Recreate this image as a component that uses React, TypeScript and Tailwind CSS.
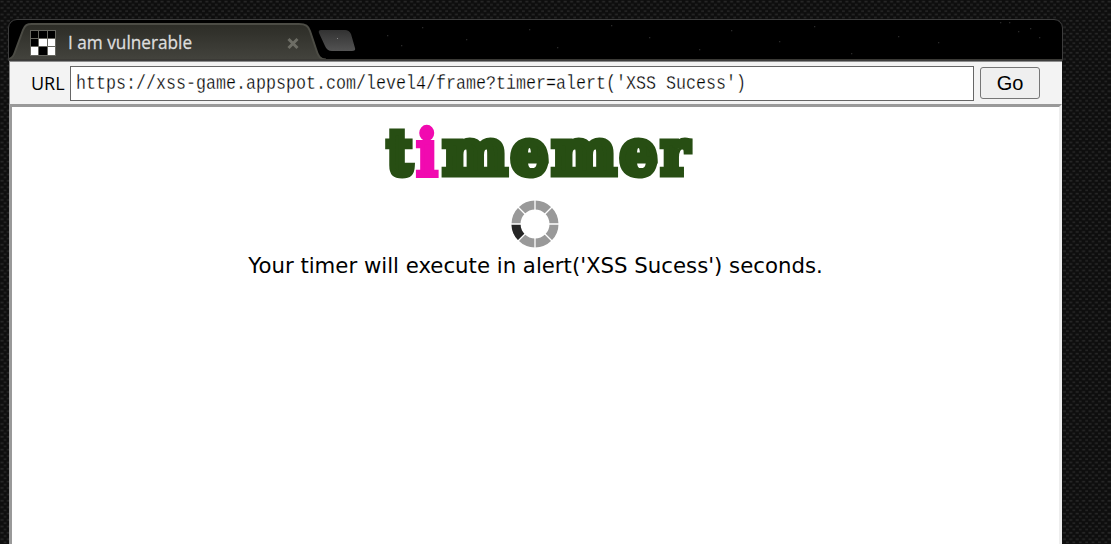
const URL_VALUE = "https://xss-game.appspot.com/level4/frame?timer=alert('XSS Sucess')"

const favicon = ['#000', '#000', '#000', '#000', '#fff', '#fff', '#fff', '#000', '#fff']

const stars = [
  [392, 25], [378, 15], [413, 7], [457, 19], [520, 9], [548, 27], [602, 5], [640, 17],
  [690, 29], [722, 10], [770, 21], [805, 6], [842, 33], [889, 16], [929, 22], [991, 2],
  [1000, 2], [1009, 11], [1021, 8], [1030, 17],
]

function TabStrip() {
  return (
    <div className="relative h-[42px] overflow-hidden rounded-t-[9px] border border-[#3d3d3d] bg-black">
      {/* tab outline and the starry strip behind it */}
      <svg className="absolute left-0 top-0" width="1053" height="41" viewBox="0 0 1053 41">
        <defs>
          <linearGradient id="tab" x1="0" y1="0" x2="0" y2="1">
            <stop offset="0" stopColor="#2c2c26" />
            <stop offset="1" stopColor="#43433d" />
          </linearGradient>
          <linearGradient id="newTab" x1="0" y1="0" x2="0" y2="1">
            <stop offset="0" stopColor="#323232" />
            <stop offset="1" stopColor="#535353" />
          </linearGradient>
        </defs>
        {stars.map(([x, y]) => (
          <rect key={`${x}-${y}`} x={x} y={y} width="1.3" height="1.3" fill="#292929" />
        ))}
        <path d="M-1 39.5C4 38 5 35 7 29L14 10C16 5 18 4 23 4H290C297 4 299 6 301 11L307 29C309 36 311 39.5 317 39.5Z" fill="url(#tab)" />
        <path d="M-1 39.5C4 38 5 35 7 29L14 10C16 5 18 4 23 4H290C297 4 299 6 301 11L307 29C309 36 311 39.5 317 39.5" fill="none" stroke="#4c4c45" strokeWidth="2" />
        <path d="M312 10H336Q340 10 342 14L346 28Q347 31 343 31H323Q318 31 316 26L310 13Q309 10 312 10Z" fill="url(#newTab)" />
        <rect x="328" y="18" width="1" height="1" fill="#888" />
        <path d="M0 40H1053" stroke="#3b3a36" strokeWidth="2" />
      </svg>
      <div className="relative flex h-full w-[310px] items-center pl-[21px]">
        <div className="mt-[5px] grid size-[26px] shrink-0 grid-cols-3 gap-px bg-[#66665f] p-px">
          {favicon.map((color, i) => (
            <span key={i} style={{ backgroundColor: color }} />
          ))}
        </div>
        <span className="ml-[12px] mt-[4px] w-[150px] origin-left scale-x-[0.93] whitespace-nowrap font-['Open_Sans',sans-serif] text-[18.5px] leading-6 text-[#dedede] [-webkit-text-stroke:0.3px_#dedede]">
          I am vulnerable
        </span>
        <svg className="ml-[69px] mt-[7px] shrink-0" width="12" height="13" viewBox="0 0 12 13">
          <path d="M1.5 2L10.5 11M10.5 2L1.5 11" stroke="#6d6d65" strokeWidth="3" />
        </svg>
      </div>
    </div>
  )
}

function AddressBar() {
  return (
    <div className="flex h-[43px] items-start border-t border-[#8d8d8d] bg-[#f3f3f3] pl-[21px] pt-[4px]">
      <label className="w-[39px] whitespace-nowrap pt-[5px] font-['Open_Sans',sans-serif] text-[18px] leading-[25px] text-black">
        URL
      </label>
      <div className="flex h-[35px] w-[904px] items-center overflow-hidden border border-[#666] bg-white pl-[5px]">
        <span className="origin-left scale-x-[0.8333] whitespace-pre font-['Liberation_Mono',monospace] text-[20px] leading-6 text-black [-webkit-text-stroke:0.3px_white]">
          {URL_VALUE}
        </span>
      </div>
      <button className="ml-[6px] mt-px h-[32px] w-[60px] rounded-[3px] border border-[#767676] bg-[#efefef] font-['Liberation_Sans',sans-serif] text-[20px] leading-none text-black">
        Go
      </button>
    </div>
  )
}

function Logo() {
  return (
    <svg
      width="310"
      height="60"
      viewBox="0 0 310 60"
      fill="#274e13"
      stroke="#274e13"
      strokeWidth="7"
      strokeLinejoin="miter"
      className="overflow-visible font-['DejaVu_Serif',serif] text-[61px] font-bold"
    >
      <text x="6" y="53" textLength="25" lengthAdjust="spacingAndGlyphs">t</text>
      <text x="62" y="53" textLength="64" lengthAdjust="spacingAndGlyphs">m</text>
      <text x="130" y="53" textLength="37" lengthAdjust="spacingAndGlyphs">e</text>
      <text x="171" y="53" textLength="64" lengthAdjust="spacingAndGlyphs">m</text>
      <text x="239" y="53" textLength="37" lengthAdjust="spacingAndGlyphs">e</text>
      <text x="280" y="53" textLength="28" lengthAdjust="spacingAndGlyphs">r</text>
      <text x="35" y="54" textLength="22" lengthAdjust="spacingAndGlyphs" fill="#f10ab0" stroke="#f10ab0" strokeWidth="4.5" className="text-[63px]">i</text>
    </svg>
  )
}

function Spinner() {
  return (
    <svg width="48" height="48" viewBox="0 0 48 48" fill="none">
      <circle cx="24" cy="24" r="19" stroke="#999" strokeWidth="9" />
      <path d="M5 24A19 19 0 0 0 10.6 37.4" stroke="#252525" strokeWidth="9" />
      <path d="M24 0V48M0 24H48M7 7L41 41M41 7L7 41" stroke="#fff" strokeWidth="1.3" />
    </svg>
  )
}

export default function App() {
  return (
    <div className="relative h-[544px] w-[1111px] overflow-hidden bg-[#101010]">
      <svg className="absolute inset-0" width="1111" height="544">
        <defs>
          <pattern id="carbon" width="6.4" height="6.4" patternUnits="userSpaceOnUse">
            <rect width="6.4" height="6.4" fill="#0e0e0e" />
            <rect x="0.5" y="0.8" width="3" height="1.6" fill="#282828" />
            <rect x="3.7" y="4" width="2.7" height="1.6" fill="#252525" />
          </pattern>
        </defs>
        <rect width="1111" height="544" fill="url(#carbon)" />
      </svg>
      <div className="relative flex h-full w-[1063px] flex-col pl-[8px] pt-[19px]">
        <TabStrip />
        <div className="flex min-h-0 flex-1 flex-col pl-px pr-px">
          <div className="border-l border-[#8d8d8d]">
            <AddressBar />
          </div>
          <div className="flex flex-1 flex-col items-center border-l-[3px] border-r-[3px] border-t-[3px] border-l-[#999] border-r-[#eee] border-t-[#999] bg-white pt-[14px]">
            <div className="h-[79px]">
              <Logo />
            </div>
            <div className="mr-px h-[48px]">
              <Spinner />
            </div>
            <p className="mt-[4px] whitespace-nowrap font-['DejaVu_Sans',sans-serif] text-[21.25px] leading-[28px] text-black">
              Your timer will execute in alert('XSS Sucess') seconds.
            </p>
          </div>
        </div>
      </div>
    </div>
  )
}
